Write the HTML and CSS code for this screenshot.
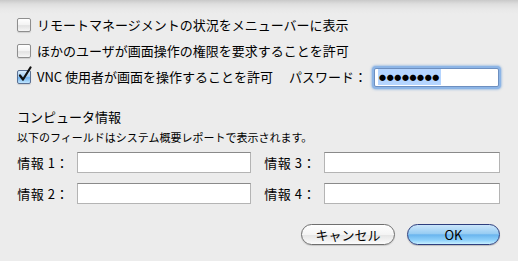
FILE: index.html
```html
<!DOCTYPE html>
<html>
<head>
<meta charset="UTF-8">
<title>画面共有</title>
<link rel="stylesheet" href="styles.css">
</head>
<body>
<div class="sheet">
	<div class="checks">
		<div class="row">
			<span class="box"></span>
			<span>リモートマネージメントの状況をメニューバーに表示</span>
		</div>
		<div class="row">
			<span class="box"></span>
			<span>ほかのユーザが画面操作の権限を要求することを許可</span>
		</div>
		<div class="row">
			<span class="box checked">
				<svg width="15" height="17" viewBox="0 0 15 17"><path d="M3 9.5 L6 13.5 L13.5 1.5" fill="none" stroke="#111" stroke-width="2.2" stroke-linecap="round" stroke-linejoin="round"/></svg>
			</span>
			<span>VNC 使用者が画面を操作することを許可</span>
			<span class="pwlabel">パスワード：</span>
			<span class="pwfield"><span class="sel">●●●●●●●●</span></span>
		</div>
	</div>

	<div class="title">コンピュータ情報</div>
	<div class="sub">以下のフィールドはシステム概要レポートで表示されます。</div>

	<div class="info">
		<label>情報 1：</label><span class="field"></span>
		<label>情報 3：</label><span class="field"></span>
		<label>情報 2：</label><span class="field"></span>
		<label>情報 4：</label><span class="field"></span>
	</div>

	<div class="buttons">
		<span class="btn cancel">キャンセル</span>
		<span class="btn ok">OK</span>
	</div>
</div>
</body>
</html>
```

FILE: styles.css
```css
html, body{
	margin:0;
	padding:0;
}
body{
	width:518px;
	height:261px;
	overflow:hidden;
	background:linear-gradient(#c9c9c9 0px, #dedede 4px, #e8e8e8 9px, #ececec 14px, #ececec 100%);
	font-family:"Noto Sans CJK JP", "DejaVu Sans", sans-serif;
	font-size:13px;
	color:#000;
}
.sheet{
	padding:12px 18px 0 17px;
}
.row{
	display:flex;
	align-items:center;
	height:26px;
	line-height:16px;
}
.box{
	position:relative;
	width:12px;
	height:12px;
	margin-right:6px;
	border:1px solid #8e8e8e;
	border-radius:2px;
	background:linear-gradient(#ffffff, #f3f3f3 50%, #e2e2e2 55%, #f6f6f6);
	box-shadow:0 1px 1px rgba(0,0,0,0.12);
}
.box.checked{
	border-color:#5a6f92;
	background:linear-gradient(#d8ecfc, #9ccaf2 50%, #6fb0ec 55%, #bfe6ff);
}
.box svg{
	position:absolute;
	left:-1px;
	top:-5px;
}
.pwlabel{
	margin-left:16px;
	width:85px;
}
.pwfield{
	display:flex;
	align-items:center;
	width:120px;
	height:17px;
	padding-left:3px;
	background:#fff;
	border:1px solid #6d8fc0;
	box-shadow:0 0 0 2px #8db5e6, 0 0 2px 3px rgba(110,160,220,0.5);
	border-radius:2px;
}
.sel{
	background:#b5d5ff;
	font-size:7px;
	letter-spacing:0.6px;
	line-height:16px;
	padding:0 1px;
}
.title{
	margin-top:19px;
	line-height:16px;
}
.sub{
	margin-top:5px;
	font-size:11px;
	line-height:14px;
}
.info{
	display:grid;
	grid-template-columns:60px 174px 73px 176px;
	row-gap:10px;
	margin-top:8px;
}
.info label{
	text-align:right;
	padding-right:8px;
	line-height:21px;
	font-size:13px;
	letter-spacing:0.5px;
}
.field{
	height:19px;
	background:#fff;
	border:1px solid #b4b4b4;
	border-top-color:#8a8a8a;
}
.buttons{
	display:flex;
	justify-content:flex-end;
	gap:12px;
	margin-top:20px;
}
.btn{
	box-sizing:border-box;
	height:21px;
	width:94px;
	border-radius:11px;
	text-align:center;
	line-height:19px;
	font-size:13px;
}
.cancel{
	border:1px solid #6f6f6f;
	background:linear-gradient(#ffffff, #f4f4f4 50%, #e6e6e6 55%, #fbfbfb);
	box-shadow:0 1px 1px rgba(0,0,0,0.15);
}
.ok{
	width:93px;
	border:1px solid #2e3f7e;
	background:linear-gradient(#cbe6fb, #98cdf3 45%, #6ab5ee 52%, #8fd1fb 80%, #c8f0ff);
	box-shadow:0 1px 1px rgba(0,0,0,0.2);
}
```
